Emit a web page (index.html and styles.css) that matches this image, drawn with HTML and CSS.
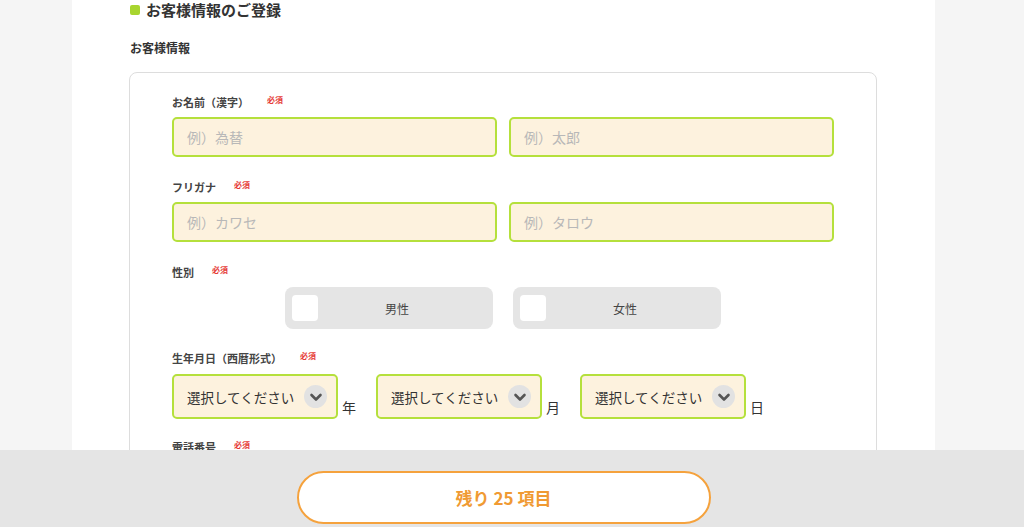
FILE: index.html
```html
<!DOCTYPE html>
<html lang="ja">
<head>
<meta charset="utf-8">
<title>お客様情報のご登録</title>
<link rel="stylesheet" href="styles.css">
</head>
<body>
<div class="page">
  <h1 class="title"><span class="mark"></span>お客様情報のご登録</h1>
  <h2 class="subtitle">お客様情報</h2>
  <div class="card">
    <div class="field">
      <div class="label">お名前（漢字）<span class="req">必須</span></div>
      <div class="pair">
        <div class="input">例）為替</div>
        <div class="input">例）太郎</div>
      </div>
    </div>
    <div class="field">
      <div class="label">フリガナ<span class="req">必須</span></div>
      <div class="pair">
        <div class="input">例）カワセ</div>
        <div class="input">例）タロウ</div>
      </div>
    </div>
    <div class="field">
      <div class="label">性別<span class="req">必須</span></div>
      <div class="genders">
        <div class="gender"><span class="box"></span><span class="gtext">男性</span></div>
        <div class="gender"><span class="box"></span><span class="gtext">女性</span></div>
      </div>
    </div>
    <div class="field">
      <div class="label">生年月日（西暦形式）<span class="req">必須</span></div>
      <div class="dates">
        <div class="dgroup">
          <div class="select"><span>選択してください</span><span class="chev"><svg viewBox="0 0 22 22" width="22" height="22"><polyline points="6.5,9 11,13.5 15.5,9" fill="none" stroke="#555" stroke-width="2.6" stroke-linecap="round" stroke-linejoin="round"/></svg></span></div>
          <span class="unit">年</span>
        </div>
        <div class="dgroup">
          <div class="select"><span>選択してください</span><span class="chev"><svg viewBox="0 0 22 22" width="22" height="22"><polyline points="6.5,9 11,13.5 15.5,9" fill="none" stroke="#555" stroke-width="2.6" stroke-linecap="round" stroke-linejoin="round"/></svg></span></div>
          <span class="unit">月</span>
        </div>
        <div class="dgroup">
          <div class="select"><span>選択してください</span><span class="chev"><svg viewBox="0 0 22 22" width="22" height="22"><polyline points="6.5,9 11,13.5 15.5,9" fill="none" stroke="#555" stroke-width="2.6" stroke-linecap="round" stroke-linejoin="round"/></svg></span></div>
          <span class="unit">日</span>
        </div>
      </div>
    </div>
    <div class="field">
      <div class="label">電話番号<span class="req">必須</span></div>
      <div class="pair">
        <div class="input">例）09012345678</div>
      </div>
    </div>
  </div>
</div>
<div class="bottombar">
  <div class="barinner">
    <div class="remain">残り 25 項目</div>
  </div>
</div>
</body>
</html>
```
FILE: styles.css
```css
* { box-sizing: border-box; }
html, body { margin: 0; padding: 0; }
body {
  background: #f5f5f5;
  font-family: "Noto Sans CJK JP", "Noto Sans", sans-serif;
  color: #333;
  overflow: hidden;
}
.page {
  width: 863px;
  margin-left: 72px;
  background: #fff;
  padding: 0 58px 120px 57px;
  min-height: 700px;
}
.title {
  margin: 0;
  display: flex;
  align-items: center;
  font-size: 15px;
  line-height: 20px;
  font-weight: bold;
  color: #333;
  padding-left: 1px;
}
.mark {
  width: 10px;
  height: 10px;
  background: #a8d52f;
  border-radius: 2px;
  margin-right: 6px;
}
.subtitle {
  margin: 19px 0 0 1px;
  font-size: 12px;
  line-height: 18px;
  font-weight: bold;
  color: #333;
}
.card {
  margin-top: 15px;
  border: 1px solid #ddd;
  border-radius: 8px;
  padding: 21px 41px 30px 42px;
}
.field { margin-bottom: 22px; }
.label {
  font-size: 11px;
  line-height: 16px;
  font-weight: bold;
  color: #444;
  margin-bottom: 7px;
  display: flex;
  align-items: center;
}
.req {
  color: #e53935;
  font-size: 8px;
  line-height: 10px;
  font-weight: bold;
  margin-left: 18px;
  margin-top: -4px;
}
.pair {
  display: flex;
  gap: 12px;
}
.input {
  width: 325px;
  height: 40px;
  border: 2px solid #b5e03c;
  border-radius: 5px;
  background: #fdf2de;
  color: #b8b8b8;
  font-size: 14px;
  line-height: 36px;
  padding-left: 13px;
}
.genders {
  display: flex;
  justify-content: center;
  gap: 20px;
  padding-right: 1px;
}
.gender {
  width: 208px;
  height: 42px;
  background: #e5e5e5;
  border-radius: 8px;
  display: flex;
  align-items: center;
  padding: 0 17px 0 7px;
}
.box {
  width: 26px;
  height: 26px;
  background: #fff;
  border-radius: 4px;
}
.gtext {
  flex: 1;
  text-align: center;
  font-size: 12px;
  color: #444;
}
.field:nth-child(3) { margin-bottom: 21px; }
.field:nth-child(4) .label { margin-bottom: 8px; }
.field:nth-child(4) { margin-bottom: 20px; }
.dates {
  display: flex;
  gap: 20px;
}
.dgroup {
  display: flex;
  align-items: flex-end;
}
.select {
  width: 166px;
  height: 45px;
  border: 2px solid #b5e03c;
  border-radius: 5px;
  background: #fdf2de;
  display: flex;
  align-items: center;
  justify-content: space-between;
  padding: 0 9px 0 13px;
  font-size: 13.5px;
  color: #333;
}
.chev {
  width: 23px;
  height: 23px;
  border-radius: 50%;
  background: #e2e2e2;
  display: flex;
  align-items: center;
  justify-content: center;
}
.unit {
  font-size: 14px;
  line-height: 20px;
  margin-left: 4px;
  padding-bottom: 2px;
  color: #333;
}
.bottombar {
  position: fixed;
  left: 0;
  right: 0;
  bottom: 0;
  height: 77px;
  background: #e5e5e5;
}
.barinner {
  width: 863px;
  margin-left: 72px;
  padding-top: 21px;
  display: flex;
  justify-content: center;
}
.remain {
  width: 414px;
  height: 53px;
  border: 2px solid #f5a23d;
  border-radius: 27px;
  background: #fff;
  color: #f09a33;
  font-size: 17px;
  font-weight: bold;
  display: flex;
  align-items: center;
  justify-content: center;
}
```
